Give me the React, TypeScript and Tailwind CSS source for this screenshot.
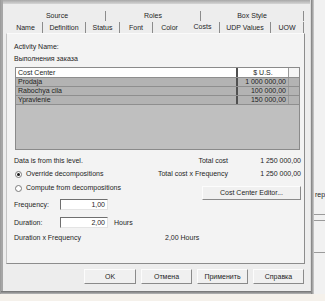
import React from "react";

type TabProps = { label: string; w: string; sep?: boolean; active?: boolean };

function Tab({ label, w, sep = true, active = false }: TabProps) {
  return (
    <div
      className={`${w} h-full shrink-0 flex items-center justify-center ${
        sep ? "border-r border-[#8c8c8c]" : ""
      } ${active ? "pb-[2px]" : ""}`}
    >
      {label}
    </div>
  );
}

function Radio({ checked }: { checked?: boolean }) {
  return (
    <div className="w-[7px] h-[7px] rounded-full border border-[#7a7a7a] bg-white flex items-center justify-center">
      {checked && <div className="w-[3px] h-[3px] rounded-full bg-[#1a1a1a]" />}
    </div>
  );
}

function Field({ value }: { value: string }) {
  return (
    <div className="w-[48px] h-[11px] bg-white border-t border-l border-t-[#6f6f6f] border-l-[#6f6f6f] border-b border-r border-b-[#e4e4e4] border-r-[#e4e4e4] flex items-center justify-end pr-[2px]">
      {value}
    </div>
  );
}

function Btn({ label, w }: { label: string; w: string }) {
  return (
    <div
      className={`${w} h-full shrink-0 bg-[#f0f0f0] border border-t-[#fcfcfc] border-l-[#fcfcfc] border-b-[#8a8a8a] border-r-[#8a8a8a] flex items-center justify-center`}
    >
      {label}
    </div>
  );
}

const rows = [
  { name: "Prodaja", cost: "1 000 000,00" },
  { name: "Rabochya cila", cost: "100 000,00" },
  { name: "Ypravlenie", cost: "150 000,00" },
];

function CostTable() {
  return (
    <div className="ml-[1px] w-[285px] h-[83px] shrink-0 border border-[#8a8a8a] bg-[#bfbfbf] flex flex-col">
      <div className="h-[10px] shrink-0 flex bg-white border-b border-[#8e8e8e]">
        <div className="w-[220px] pl-[2px] flex items-center">Cost Center</div>
        <div className="w-[52px] border-l-2 border-[#505050] flex items-center justify-center">
          $ U.S.
        </div>
        <div className="flex-1 border-l border-[#9a9a9a] bg-[#f4f4f4]" />
      </div>
      {rows.map((r) => (
        <div
          key={r.name}
          className="h-[9px] shrink-0 flex bg-[#b3b3b3] border-b border-[#8e8e8e]"
        >
          <div className="w-[220px] pl-[2px] flex items-center">{r.name}</div>
          <div className="w-[52px] border-l-2 border-[#505050] flex items-center justify-end pr-[2px]">
            {r.cost}
          </div>
          <div className="flex-1 border-l border-[#9a9a9a]" />
        </div>
      ))}
    </div>
  );
}

function Panel() {
  return (
    <div className="ml-[3px] w-[299px] h-[231px] shrink-0 bg-[#f3f3f3] border border-t-[#fafafa] border-l-[#c4c4c4] border-b-[#8c8c8c] border-r-[#8c8c8c] flex flex-col pt-[8px] pl-[7px] pr-[3px]">
      <div className="h-[10px] flex items-center">Activity Name:</div>
      <div className="mt-[2px] h-[10px] flex items-center">Выполнения заказа</div>
      <div className="mt-[3px]">
        <CostTable />
      </div>

      <div className="mt-[6px] flex">
        <div className="w-[140px] shrink-0 flex flex-col whitespace-nowrap">
          <div className="h-[10px] flex items-center">Data is from this level.</div>
          <div className="mt-[3px] h-[10px] flex items-center gap-[4px] pl-[1px]">
            <Radio checked />
            <span>Override decompositions</span>
          </div>
          <div className="mt-[4px] h-[10px] flex items-center gap-[4px] pl-[1px]">
            <Radio />
            <span>Compute from decompositions</span>
          </div>
          <div className="mt-[6px] h-[11px] flex items-center">
            <div className="w-[46px]">Frequency:</div>
            <Field value="1,00" />
          </div>
          <div className="mt-[7px] h-[11px] flex items-center">
            <div className="w-[46px]">Duration:</div>
            <Field value="2,00" />
            <div className="ml-[6px]">Hours</div>
          </div>
        </div>
        <div className="flex-1 flex flex-col items-end whitespace-nowrap">
          <div className="grid grid-cols-[auto_73px] gap-y-[3px]">
            <div className="h-[10px] flex items-center justify-end">Total cost</div>
            <div className="h-[10px] flex items-center justify-end">1 250 000,00</div>
            <div className="h-[10px] flex items-center justify-end">
              Total cost x Frequency
            </div>
            <div className="h-[10px] flex items-center justify-end">1 250 000,00</div>
          </div>
          <div className="mt-[7px] h-[14px] flex">
            <Btn label="Cost Center Editor..." w="w-[99px]" />
          </div>
        </div>
      </div>

      <div className="mt-[5px] h-[10px] flex items-center">
        <div className="w-[151px]">Duration x Frequency</div>
        <div>2,00 Hours</div>
      </div>
    </div>
  );
}

function Dialog() {
  return (
    <div className="w-[310px] h-[291px] shrink-0 bg-[#ededed] border-l-2 border-[#a6a6a6] border-r border-r-[#dcdcdc] flex flex-col">
      <div className="h-[4px] shrink-0 bg-gradient-to-b from-[#a8a8a8] to-[#d6d6d6]" />
      <div className="mt-[7px] ml-[6px] h-[10px] flex shrink-0">
        <Tab label="Source" w="w-[97px]" />
        <Tab label="Roles" w="w-[95px]" />
        <Tab label="Box Style" w="w-[103px]" />
      </div>
      <div className="mt-[1px] ml-[6px] h-[11px] flex shrink-0">
        <Tab label="Name" w="w-[34px]" />
        <Tab label="Definition" w="w-[43px]" />
        <Tab label="Status" w="w-[34px]" />
        <Tab label="Font" w="w-[33px]" />
        <Tab label="Color" w="w-[33px]" sep={false} />
        <Tab label="Costs" w="w-[34px]" active />
        <Tab label="UDP Values" w="w-[51px]" />
        <Tab label="UOW" w="w-[33px]" />
      </div>
      <Panel />
      <div className="mt-[5px] h-[15px] shrink-0 flex gap-[5px] pl-[81px]">
        <Btn label="OK" w="w-[52px]" />
        <Btn label="Отмена" w="w-[51px]" />
        <Btn label="Применить" w="w-[51px]" />
        <Btn label="Справка" w="w-[51px]" />
      </div>
    </div>
  );
}

function Backdrop() {
  return (
    <div className="flex-1 h-full flex">
      <div className="w-[3px] h-full bg-gradient-to-r from-[#7c7c7c] to-[#cfcfcf]" />
      <div className="flex-1 h-full bg-[#f1f1f1] overflow-hidden flex flex-col">
        <div className="h-[190px] shrink-0" />
        <div className="h-[10px] shrink-0 pl-[1px] flex items-center whitespace-nowrap">
          rep
        </div>
        <div className="h-[15px] shrink-0 border-b border-[#9a9a9a]" />
        <div className="h-[6px] shrink-0 border-b border-[#9a9a9a]" />
        <div className="h-[32px] shrink-0 border-b border-[#9a9a9a]" />
      </div>
    </div>
  );
}

export default function App() {
  return (
    <div className="w-[325px] h-[301px] overflow-hidden bg-[#f5f1eb] flex flex-col font-['Liberation_Sans',Arial,sans-serif] text-[7px] leading-[10px] text-[#1e1e1e]">
      <div className="h-[294px] shrink-0 flex">
        <div className="w-[3px] h-full bg-[#cfcfcf] border-r border-[#9c9c9c]" />
        <div className="flex flex-col">
          <Dialog />
          <div className="h-[3px] bg-gradient-to-b from-[#6e6e6e] to-[#b8b8b8]" />
        </div>
        <Backdrop />
      </div>
    </div>
  );
}
